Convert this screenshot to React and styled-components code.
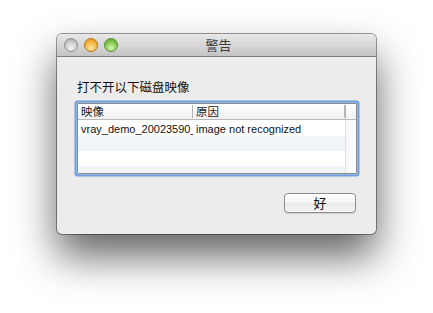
import React from 'react';
import styled, { createGlobalStyle } from 'styled-components';

const GlobalStyle = createGlobalStyle`
  body {
    margin: 0;
    background: #ffffff;
    font-family: "Liberation Sans", "Noto Sans CJK SC", sans-serif;
  }
`;

const Page = styled.div`
  width: 433px;
  height: 313px;
  padding: 34px 0 0 57px;
  box-sizing: border-box;
  overflow: hidden;
`;

const Window = styled.div`
  width: 319px;
  height: 200px;
  display: flex;
  flex-direction: column;
  background: #ececec;
  border-radius: 5px;
  box-shadow: 0 0 0 1px rgba(0, 0, 0, 0.38), 0 22px 42px rgba(0, 0, 0, 0.62);
  overflow: hidden;
`;

const TitleBar = styled.div`
  position: relative;
  height: 22px;
  flex: none;
  display: flex;
  align-items: center;
  justify-content: center;
  background: linear-gradient(#e8e8e8, #d3d3d3 60%, #c4c4c4);
  border-bottom: 1px solid #7e7e7e;
`;

const Lights = styled.div`
  position: absolute;
  left: 7px;
  top: 4px;
  display: flex;
  gap: 6px;
`;

const Light = styled.span`
  width: 14px;
  height: 14px;
  border-radius: 50%;
  box-sizing: border-box;
  border: 1px solid ${(p) => p.$edge};
  background: radial-gradient(circle at 50% 75%, ${(p) => p.$glow} 0%, ${(p) => p.$base} 60%, ${(p) => p.$dark} 100%);
`;

const Title = styled.div`
  font-family: "Noto Sans CJK SC", sans-serif;
  font-size: 13px;
  color: #3a3a3a;
  line-height: 22px;
  padding-left: 4px;
`;

const Body = styled.div`
  flex: 1;
  display: flex;
  flex-direction: column;
  padding: 22px 20px 0 20px;
`;

const Message = styled.div`
  font-family: "Noto Sans CJK SC", sans-serif;
  font-size: 12.5px;
  line-height: 16px;
  color: #111;
`;

const Table = styled.div`
  margin-top: 8px;
  width: 278px;
  height: 69px;
  background: #fff;
  border: 1px solid #8a8a8a;
  box-shadow: 0 0 0 1px #8fb9ea, 0 0 0 2.5px #6e9fdc;
  display: flex;
  flex-direction: column;
  overflow: hidden;
  border-radius: 1px;
`;

const HeaderRow = styled.div`
  display: grid;
  grid-template-columns: 115px 1fr 11px;
  align-items: center;
  height: 15px;
  flex: none;
  background: linear-gradient(#ffffff, #f1f1f1);
  border-bottom: 1px solid #b9b9b9;
`;

const HeadCell = styled.div`
  font-family: "Noto Sans CJK SC", sans-serif;
  font-size: 11.5px;
  line-height: 13px;
  height: 13px;
  color: #222;
  padding-left: 3px;
  border-right: ${(p) => (p.$last ? 'none' : '1px solid #b3b3b3')};
  border-left: ${(p) => (p.$last ? '1px solid #b3b3b3' : 'none')};
`;

const Rows = styled.div`
  display: grid;
  grid-template-columns: 1fr 11px;
  flex: 1;
`;

const RowList = styled.div`
  display: flex;
  flex-direction: column;
  padding-top: 1px;
`;

const Row = styled.div`
  display: grid;
  grid-template-columns: 115px 1fr;
  height: 15px;
  flex: none;
  background: ${(p) => (p.$alt ? '#f1f4f9' : '#ffffff')};
`;

const Cell = styled.div`
  font-family: "Liberation Sans", sans-serif;
  font-size: 11px;
  line-height: 16px;
  color: #111;
  padding-left: 3px;
  white-space: nowrap;
  overflow: hidden;
`;

const Gutter = styled.div`
  border-left: 1px solid #e0e0e0;
  background: linear-gradient(90deg, #f7f7f7, #ffffff);
`;

const Footer = styled.div`
  display: flex;
  justify-content: flex-end;
  margin-top: 19px;
`;

const Button = styled.button`
  width: 72px;
  height: 20px;
  border: 1px solid #8e8e8e;
  border-radius: 4px;
  background: linear-gradient(#ffffff, #f3f3f3 50%, #e9e9e9 51%, #f6f6f6);
  font-family: "Noto Sans CJK SC", sans-serif;
  font-size: 13px;
  line-height: 18px;
  color: #111;
  padding: 0;
  box-shadow: 0 1px 1px rgba(0, 0, 0, 0.12);
`;

const rows = [
  { name: 'vray_demo_20023590_', reason: 'image not recognized' },
  { name: '', reason: '' },
  { name: '', reason: '' },
  { name: '', reason: '' },
];

export default function App() {
  return (
    <Page>
      <GlobalStyle />
      <Window>
        <TitleBar>
          <Lights>
            <Light $edge="#8d8d8d" $base="#c9c9c9" $glow="#f4f4f4" $dark="#9a9a9a" />
            <Light $edge="#b5731a" $base="#f4b23a" $glow="#ffe7a0" $dark="#d48a18" />
            <Light $edge="#5a8f2c" $base="#7fc24c" $glow="#d6f6b6" $dark="#4f9a2a" />
          </Lights>
          <Title>警告</Title>
        </TitleBar>
        <Body>
          <Message>打不开以下磁盘映像</Message>
          <Table>
            <HeaderRow>
              <HeadCell>映像</HeadCell>
              <HeadCell>原因</HeadCell>
              <HeadCell $last />
            </HeaderRow>
            <Rows>
              <RowList>
                {rows.map((r, i) => (
                  <Row key={i} $alt={i % 2 === 1}>
                    <Cell>{r.name}</Cell>
                    <Cell>{r.reason}</Cell>
                  </Row>
                ))}
              </RowList>
              <Gutter />
            </Rows>
          </Table>
          <Footer>
            <Button>好</Button>
          </Footer>
        </Body>
      </Window>
    </Page>
  );
}
